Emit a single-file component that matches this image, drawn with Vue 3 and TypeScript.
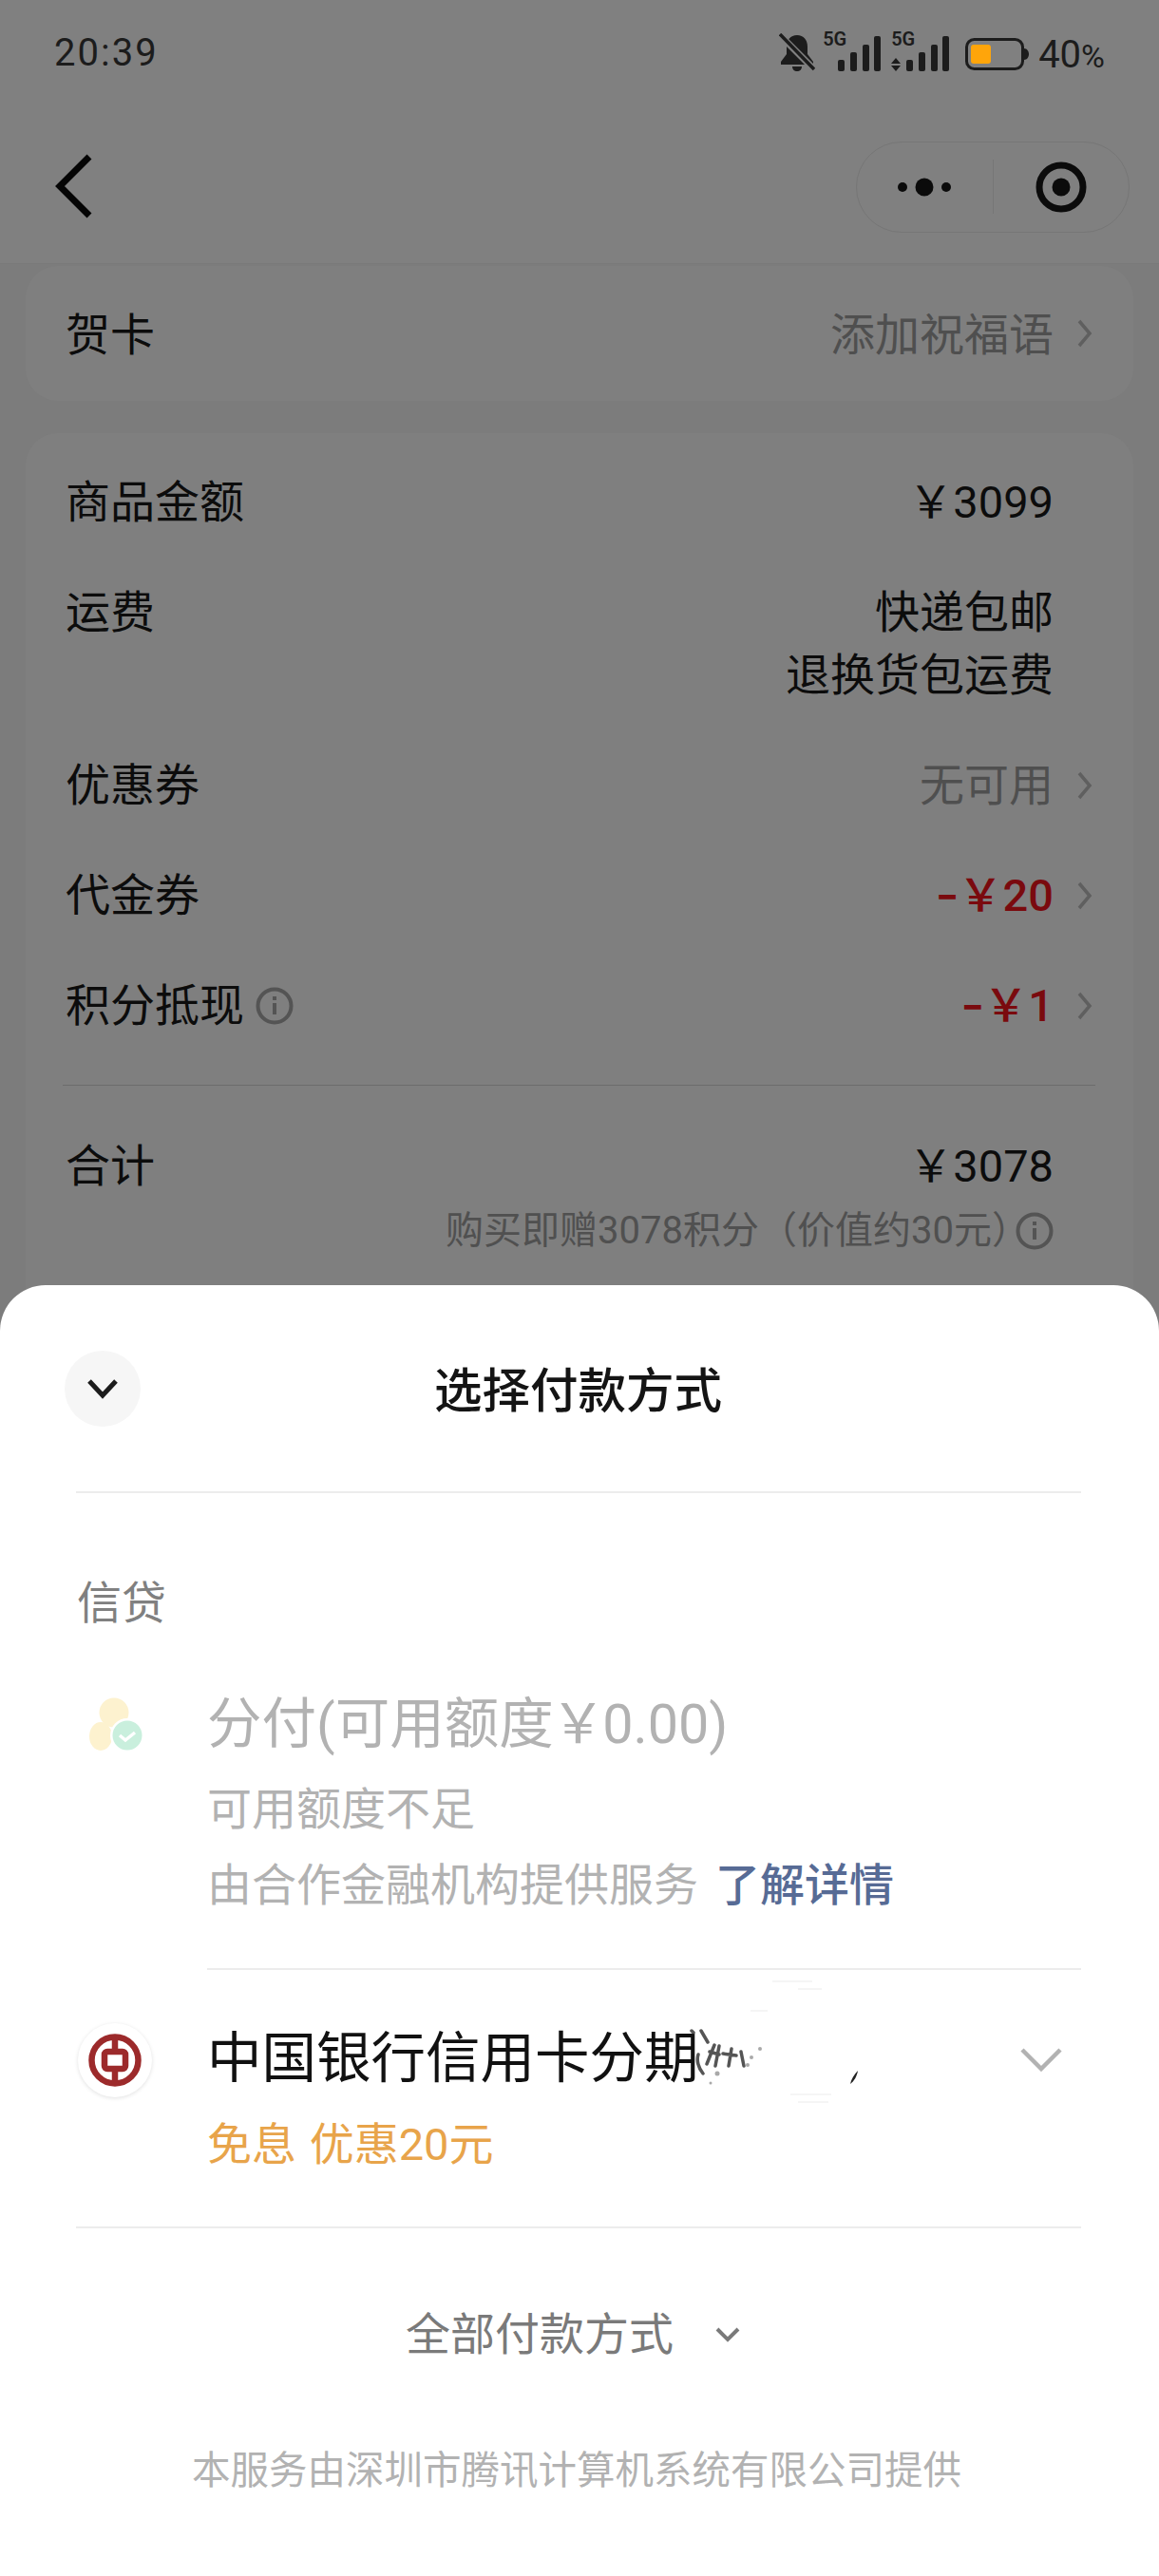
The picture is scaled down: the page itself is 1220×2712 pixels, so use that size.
<template>
  <div class="page">
    <div class="status">
      <span class="time">20:39</span>
      <div class="status__icons">
        <svg class="bell" viewBox="0 0 38 41" width="38" height="41">
          <path d="M19 2c-7 0-11 5-11 12v8l-6 8v3h34v-3l-6-8v-8c0-7-4-12-11-12z" fill="#1c1c1c" />
          <path d="M14 35h10c0 3-2 5-5 5s-5-2-5-5z" fill="#1c1c1c" />
          <path d="M3 4l34 34" stroke="#808080" stroke-width="7" />
          <path d="M1 1l36 37" stroke="#1c1c1c" stroke-width="3.5" />
        </svg>
        <div class="signal">
          <span class="signal__tag">5G</span>
          <svg viewBox="0 0 46 37" width="46" height="37">
            <rect x="0" y="25" width="7" height="12" rx="2" />
            <rect x="13" y="17" width="7" height="20" rx="2" />
            <rect x="26" y="9" width="7" height="28" rx="2" />
            <rect x="38" y="0" width="7" height="37" rx="2" />
          </svg>
        </div>
        <div class="signal signal--data">
          <span class="signal__tag">5G</span>
          <svg viewBox="0 0 62 37" width="62" height="37">
            <path d="M5 23l5 6H0zM5 37l5-6H0z" />
            <rect x="16" y="25" width="7" height="12" rx="2" />
            <rect x="29" y="17" width="7" height="20" rx="2" />
            <rect x="42" y="9" width="7" height="28" rx="2" />
            <rect x="54" y="0" width="7" height="37" rx="2" />
          </svg>
        </div>
        <svg class="battery" viewBox="0 0 67 34" width="67" height="34">
          <rect x="1.5" y="1.5" width="59" height="31" rx="8" fill="none" stroke="#1c1c1c" stroke-width="3" />
          <rect x="6" y="7" width="21" height="20" rx="3" fill="#ffa50a" />
          <path d="M62 11c3 0 5 3 5 6s-2 6-5 6z" fill="#1c1c1c" />
        </svg>
        <span class="percent">40<small>%</small></span>
      </div>
    </div>

    <header class="nav">
      <svg class="nav__back" viewBox="0 0 40 68" width="40" height="68">
        <path d="M36 3L5 34l31 31" fill="none" stroke="#050505" stroke-width="7" />
      </svg>
      <div class="capsule">
        <div class="capsule__side">
          <svg viewBox="0 0 56 20" width="56" height="20">
            <circle cx="5" cy="10" r="5" />
            <circle cx="28" cy="10" r="9.5" />
            <circle cx="51" cy="10" r="5" />
          </svg>
        </div>
        <span class="capsule__rule" />
        <div class="capsule__side">
          <svg viewBox="0 0 54 54" width="54" height="54">
            <circle cx="27" cy="27" r="23" fill="none" stroke="#0b0b0b" stroke-width="7" />
            <circle cx="27" cy="27" r="9.5" />
          </svg>
        </div>
      </div>
    </header>

    <main class="content">
      <section class="card card--greeting">
        <span class="card__text">贺卡</span>
        <div class="row__end">
          <span class="card__text tone-muted">添加祝福语</span>
          <svg class="arrow" viewBox="0 0 16 30" width="16" height="30"><path d="M2 2l11 13L2 28" /></svg>
        </div>
      </section>

      <section class="card card--summary">
        <div v-for="row in rows" :key="row.label" class="row">
          <div class="row__label">
            {{ row.label }}
            <svg v-if="row.info" class="info" viewBox="0 0 40 40" width="40" height="40">
              <circle cx="20" cy="20" r="17.5" />
              <path d="M20 17v12M20 10v4" />
            </svg>
          </div>
          <div class="row__end">
            <div class="row__value" :class="`tone-${row.tone}`">
              <div v-for="line in row.lines" :key="line">
                <span v-if="row.tone === 'red'" class="minus">−</span>{{ line }}
              </div>
            </div>
            <svg v-if="row.arrow" class="arrow" viewBox="0 0 16 30" width="16" height="30"><path d="M2 2l11 13L2 28" /></svg>
            <span v-else class="arrow-slot" />
          </div>
        </div>
        <div class="card__rule" />
        <div class="row row--total">
          <span>合计</span>
          <div class="row__end">
            <div class="row__value">{{ YEN }}3078</div>
            <span class="arrow-slot" />
          </div>
        </div>
        <div class="points">
          购买即赠3078积分（价值约30元）
          <svg class="info" viewBox="0 0 40 40" width="40" height="40">
            <circle cx="20" cy="20" r="17.5" />
            <path d="M20 17v12M20 10v4" />
          </svg>
        </div>
      </section>
    </main>

    <div class="sheet">
      <div class="sheet__head">
        <div class="sheet__close">
          <svg viewBox="0 0 36 24" width="36" height="24">
            <path d="M4 4l14 15L32 4" fill="none" stroke="#1c1c1c" stroke-width="5" />
          </svg>
        </div>
        <div class="sheet__title">选择付款方式</div>
      </div>
      <div class="rule" />

      <div class="group">信贷</div>

      <div class="method method--off">
        <div class="method__icon">
          <svg viewBox="0 0 60 60" width="60" height="60">
            <circle cx="27" cy="17" r="15.5" fill="#fdf2cf" />
            <ellipse cx="13" cy="42" rx="12" ry="15" fill="#fdf2cf" />
            <circle cx="41" cy="41" r="18" fill="#fff" />
            <circle cx="41" cy="41" r="15.5" fill="#c9efdd" />
            <path d="M33 41l6 5 10-8" fill="none" stroke="#fff" stroke-width="3.5" />
          </svg>
        </div>
        <div class="method__body">
          <div class="method__name">分付(可用额度<span class="yen">{{ YEN }}</span>0.00)</div>
          <div class="method__note">可用额度不足</div>
          <div class="method__note">由合作金融机构提供服务<a class="method__link">了解详情</a></div>
        </div>
      </div>
      <div class="rule rule--inset" />

      <div class="method method--bank">
        <div class="method__icon">
          <div class="logo">
            <svg viewBox="0 0 56 56" width="56" height="56">
              <circle cx="28" cy="28" r="24.5" fill="none" stroke="#9c2a2b" stroke-width="6.5" />
              <path d="M28 3v50" stroke="#9c2a2b" stroke-width="6.5" />
              <rect x="17" y="19" width="22" height="18" rx="3" fill="#fff" stroke="#9c2a2b" stroke-width="6.5" />
            </svg>
          </div>
        </div>
        <div class="method__body">
          <div class="method__name method__name--on">中国银行信用卡分期</div>
          <div class="method__promo">免息 优惠20元</div>
        </div>
        <!-- the part of the card name scratched out in the screenshot -->
        <svg class="smudge" viewBox="0 0 190 150" width="190" height="150">
          <g fill="none" stroke="#f2f2f2" stroke-width="1.5">
            <path d="M88 2h42M115 10h25M65 33h18M107 121h43M115 129h32" />
          </g>
          <g fill="none" stroke="#2a2a2a" stroke-width="3.5" stroke-linecap="round" opacity=".8">
            <path d="M3 54l2 2M13 54l7 12M10 79c-2 6 0 14 5 20M27 69l-8 20M32 70l-4 21M45 73l-3 18M55 76l3 15M36 78l14 2M22 76l10 3" />
          </g>
          <path d="M178 96c-1 6-4 11-8 14 1-5 4-10 8-14z" fill="#222" />
          <g fill="#555" opacity=".5">
            <circle cx="30" cy="99" r="2.5" />
            <circle cx="75" cy="73" r="2" />
            <circle cx="23" cy="109" r="1.5" />
            <circle cx="66" cy="82" r="2" />
            <circle cx="62" cy="90" r="2" />
          </g>
        </svg>
        <svg class="method__toggle" viewBox="0 0 46 26" width="46" height="26">
          <path d="M3 3l20 20L43 3" fill="none" stroke="#b2b2b2" stroke-width="4.5" />
        </svg>
      </div>
      <div class="rule rule--bank" />

      <div class="all">
        全部付款方式
        <svg viewBox="0 0 28 18" width="28" height="18">
          <path d="M3 3l11 11L25 3" fill="none" stroke="#7a7a7a" stroke-width="4" />
        </svg>
      </div>
      <div class="foot">本服务由深圳市腾讯计算机系统有限公司提供</div>
    </div>
  </div>
</template>

<script setup lang="ts">
interface SummaryRow {
  label: string
  lines: string[]
  tone: 'plain' | 'muted' | 'red'
  arrow?: boolean
  info?: boolean
}

// fullwidth yen, the plain one is too narrow here
const YEN = '\uFFE5'

const rows: SummaryRow[] = [
  { label: '商品金额', lines: [`${YEN}3099`], tone: 'plain' },
  { label: '运费', lines: ['快递包邮', '退换货包运费'], tone: 'plain' },
  { label: '优惠券', lines: ['无可用'], tone: 'muted', arrow: true },
  { label: '代金券', lines: [`${YEN}20`], tone: 'red', arrow: true },
  { label: '积分抵现', lines: [`${YEN}1`], tone: 'red', arrow: true, info: true },
]
</script>

<style>
html,
body {
  margin: 0;
  background: #7c7c7c;
}
</style>

<style scoped>
.page {
  position: relative;
  width: 1220px;
  height: 2712px;
  overflow: hidden;
  background: #7c7c7c;
  color: #0c0c0c;
  font-family: Roboto, "Noto Sans CJK SC", sans-serif;
  font-size: 47px;
}

.status {
  display: flex;
  justify-content: space-between;
  align-items: center;
  height: 110px;
  padding: 0 57px;
  background: #808080;
  color: #1c1c1c;
}

.time {
  font-size: 40px;
  letter-spacing: 2px;
}

.status__icons {
  display: flex;
  align-items: flex-end;
  height: 42px;
}

.bell {
  margin-right: 8px;
}

.signal {
  position: relative;
  width: 46px;
  height: 37px;
  margin-left: 16px;
  margin-bottom: 1px;
}

.signal svg {
  display: block;
  fill: #1c1c1c;
}

.signal--data {
  width: 62px;
  margin-left: 10px;
}

.signal__tag {
  position: absolute;
  left: -16px;
  top: -7px;
  font-size: 20px;
  line-height: 20px;
  font-weight: 600;
}

.signal--data .signal__tag {
  left: 0;
}

.battery {
  margin-left: 16px;
  margin-bottom: 2px;
}

.percent {
  margin: 0 0 -3px 10px;
  font-size: 40px;
  line-height: 40px;
}

.percent small {
  font-size: 34px;
}

.nav {
  display: flex;
  justify-content: space-between;
  align-items: center;
  height: 168px;
  padding: 0 31px 0 58px;
  background: #808080;
  border-bottom: 1px solid #797979;
  box-sizing: border-box;
}

.nav__back {
  margin-top: 4px;
}

.capsule {
  display: flex;
  align-items: center;
  width: 288px;
  height: 96px;
  margin-top: 6px;
  box-sizing: border-box;
  border: 1px solid #767676;
  border-radius: 48px;
}

.capsule__side {
  display: flex;
  flex: 1;
  justify-content: center;
  align-items: center;
}

.capsule__rule {
  width: 1px;
  height: 57px;
  background: #767676;
}

.capsule svg {
  fill: #0b0b0b;
}

.content {
  padding: 2px 27px 0;
}

.card {
  background: #7f7f7f;
  border-radius: 34px;
}

.card--greeting {
  display: flex;
  justify-content: space-between;
  align-items: center;
  height: 142px;
  padding: 0 43px 0 42px;
}

.card__text {
  margin-top: -6px;
}

.card--summary {
  height: 960px;
  margin-top: 34px;
  padding: 40px 43px 0 42px;
}

.row {
  display: flex;
  justify-content: space-between;
  margin-bottom: 50px;
  line-height: 66px;
}

.row__label {
  display: flex;
  align-items: center;
  height: 66px;
}

.row__label .info {
  margin-left: 12px;
}

.row__end {
  display: flex;
  align-items: flex-start;
}

.card--greeting .row__end {
  align-items: center;
}

.row__value {
  text-align: right;
}

.row__value > div {
  height: 66px;
}

.minus {
  font-size: 42px;
  font-weight: 700;
  line-height: 1;
}

.yen {
  margin: 0 -3px;
}

.arrow {
  flex: none;
  margin: 18px 0 0 25px;
  fill: none;
  stroke: #5f5f5f;
  stroke-width: 3.5;
}

.card--greeting .arrow {
  margin-top: 0;
}

.arrow-slot {
  display: block;
  width: 41px;
}

.info {
  flex: none;
  fill: none;
  stroke: #545454;
  stroke-width: 4;
}

.tone-plain {
  color: #0c0c0c;
}

.tone-muted {
  color: #4f4f4f;
}

.tone-red {
  color: #7a0a0e;
  font-weight: 500;
}

.card__rule {
  height: 1px;
  margin: 4px -3px 52px;
  background: #6c6c6c;
}

.row--total {
  margin-bottom: 2px;
}

.points {
  display: flex;
  justify-content: flex-end;
  align-items: center;
  margin-right: 41px;
  color: #505050;
  font-size: 40px;
  line-height: 66px;
}

.points .info {
  margin-left: -15px;
}

.sheet {
  position: absolute;
  left: 0;
  right: 0;
  top: 1353px;
  bottom: 0;
  background: #fff;
  border-radius: 48px 48px 0 0;
}

.sheet__head {
  display: grid;
  grid-template-columns: 80px 1fr 80px;
  align-items: center;
  height: 217px;
  padding: 0 68px;
}

.sheet__close {
  display: flex;
  justify-content: center;
  align-items: center;
  width: 80px;
  height: 80px;
  border-radius: 50%;
  background: #f6f6f6;
}

.sheet__title {
  margin: -4px 3px 0 0;
  color: #141414;
  font-size: 50.5px;
  font-weight: 500;
  text-align: center;
}

.rule {
  height: 2px;
  margin: 0 82px 0 80px;
  background: #ececec;
}

.rule--inset {
  margin-left: 218px;
}

.rule--bank {
  margin-top: 4px;
}

.group {
  margin: 83px 0 0 81px;
  color: #808080;
  font-size: 47px;
  line-height: 66px;
}

.method {
  position: relative;
  display: flex;
  margin: 0 82px 0 80px;
}

.method--off {
  margin-top: 57px;
  min-height: 294px;
}

.method--bank {
  min-height: 266px;
  padding-top: 56px;
  box-sizing: border-box;
}

.method__icon {
  display: flex;
  flex: none;
  justify-content: center;
  align-items: flex-start;
  width: 80px;
  margin-right: 58px;
}

.method--off .method__icon {
  padding: 8px 0 0 5px;
  box-sizing: border-box;
}

.logo {
  display: flex;
  justify-content: center;
  align-items: center;
  width: 78px;
  height: 78px;
  margin-left: 2px;
  border-radius: 50%;
  background: #fff;
  box-shadow: 0 1px 4px rgba(0, 0, 0, 0.12);
}

.method__name {
  color: #b2b2b2;
  font-size: 57.5px;
  line-height: 76px;
}

.method__name--on {
  color: #111;
}

.method__note {
  color: #b2b2b2;
  font-size: 47px;
  line-height: 80px;
}

.method__note:nth-child(2) {
  margin-top: 11px;
}

.method__link {
  margin-left: 18px;
  color: #576b95;
  font-weight: 500;
}

.method__promo {
  margin-top: 19px;
  color: #e8a44a;
  font-size: 47px;
  line-height: 66px;
  word-spacing: 2px;
}

.smudge {
  position: absolute;
  left: 645px;
  top: 10px;
}

.method__toggle {
  position: absolute;
  right: 19px;
  top: 81px;
}

.all {
  display: flex;
  justify-content: center;
  align-items: center;
  gap: 43px;
  margin-top: 79px;
  padding-right: 13px;
  color: #7a7a7a;
  font-size: 47px;
  line-height: 66px;
}

.foot {
  margin-top: 80px;
  padding-right: 6px;
  color: #b2b2b2;
  font-size: 40.5px;
  line-height: 60px;
  text-align: center;
}
</style>
